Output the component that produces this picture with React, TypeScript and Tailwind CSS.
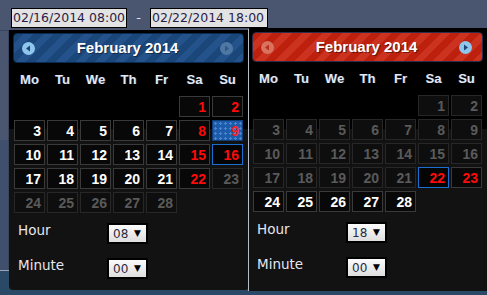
import React from "react";

type CellState = "white" | "red" | "disabled" | "selected" | "redBlue";

const sans = { fontFamily: '"Liberation Sans", Arial, sans-serif' };
const deja = { fontFamily: '"DejaVu Sans", Verdana, sans-serif' };

function Arrow({ dir, active, theme }: { dir: "l" | "r"; active: boolean; theme: "blue" | "red" }) {
  const circle = active ? "#8ec6ee" : theme === "blue" ? "#4f77a4" : "#d9735f";
  const tri = active ? "#1c4474" : theme === "blue" ? "#2d578a" : "#b8301c";
  return (
    <svg width="13" height="13" viewBox="0 0 13 13">
      <circle cx="6.5" cy="6.5" r="6.5" fill={circle} />
      {dir === "l" ? (
        <polygon points="4,6.5 8,3.5 8,9.5" fill={tri} />
      ) : (
        <polygon points="9,6.5 5,3.5 5,9.5" fill={tri} />
      )}
    </svg>
  );
}

function Cell({ n, s }: { n: number; s: CellState }) {
  let cls =
    "h-[21px] w-[31px] flex items-center justify-end pr-[3px] text-[14px] font-bold leading-none border ";
  if (s === "disabled") cls += "border-[#272727] bg-[#0e0e0e] text-[#5a5a5a]";
  else if (s === "white")
    cls += "border-[#3a3a3a] bg-[#080808] text-white";
  else if (s === "red")
    cls += "border-[#3a3a3a] bg-[#080808] text-[#ff0a0a]";
  else if (s === "redBlue")
    cls += "border-[#1a6fd0] bg-[#050505] text-[#ff0a0a]";
  else
    cls +=
      "border-[#0f3d78] bg-[#1d5caa] text-[#ff2020] bg-[radial-gradient(#4a86cf_1px,transparent_1.2px)] bg-[length:5px_5px]";
  return (
    <div className={cls} style={sans}>
      {n}
    </div>
  );
}

function Select({ value }: { value: string }) {
  return (
    <div className="w-[41px] h-[21px] border-2 border-black bg-[linear-gradient(to_bottom,#fbfbfb,#dedede)] flex items-center justify-between pl-[4px] pr-[5px]">
      <span className="text-[12px] text-[#2a2a40] leading-none" style={deja}>
        {value}
      </span>
      <span className="text-[9px] text-black leading-none" style={deja}>
        ▼
      </span>
    </div>
  );
}

function Calendar({
  theme,
  cells,
  hour,
}: {
  theme: "blue" | "red";
  cells: CellState[];
  hour: string;
}) {
  const header =
    theme === "blue"
      ? "bg-[repeating-linear-gradient(135deg,#1b467a_0px,#1b467a_7px,#24538b_7px,#24538b_14px)] border-[#0b2a52]"
      : "bg-[repeating-linear-gradient(135deg,#bd200d_0px,#bd200d_7px,#cb3220_7px,#cb3220_14px)] border-[#2d2c4a]";
  const days = ["Mo", "Tu", "We", "Th", "Fr", "Sa", "Su"];
  return (
    <div className="flex flex-col">
      <div
        className={`h-[30px] w-[231px] rounded-[4px] border flex items-center justify-between pl-[8px] pr-[10px] ${header}`}
      >
        <Arrow dir="l" active={theme === "blue"} theme={theme} />
        <span
          className="text-white text-[15px] font-bold [text-shadow:1px_1px_0_rgba(0,0,0,0.45)]"
          style={sans}
        >
          February 2014
        </span>
        <Arrow dir="r" active={theme === "red"} theme={theme} />
      </div>
      <div className="h-[33px] ml-[1px] grid grid-cols-[repeat(7,31px)] gap-x-[2px] items-center">
        {days.map((d) => (
          <div
            key={d}
            className="text-center text-[13px] font-bold text-[#e4e8f0] [text-shadow:1px_0_0_rgba(40,80,160,0.5)]"
            style={sans}
          >
            {d}
          </div>
        ))}
      </div>
      <div className="ml-[1px] grid grid-cols-[repeat(7,31px)] gap-x-[2px] gap-y-[3px]">
        {Array.from({ length: 5 }).map((_, i) => (
          <div key={"e" + i} className="h-[21px]" />
        ))}
        {cells.map((s, i) => (
          <Cell key={i} n={i + 1} s={s} />
        ))}
      </div>
      <div className="flex items-center h-[21px] mt-[10px] pl-[5px]">
        <span className="w-[89px] text-[13.5px] leading-none text-[#e6e6ee] pb-[5px]" style={deja}>
          Hour
        </span>
        <Select value={hour} />
      </div>
      <div className="flex items-center h-[21px] mt-[14px] pl-[5px]">
        <span className="w-[89px] text-[13.5px] leading-none text-[#e6e6ee] pb-[5px]" style={deja}>
          Minute
        </span>
        <Select value="00" />
      </div>
    </div>
  );
}

export default function App() {
  const left: CellState[] = [];
  const right: CellState[] = [];
  for (let d = 1; d <= 28; d++) {
    let s: CellState = "white";
    if (d === 9) s = "selected";
    else if (d === 16) s = "redBlue";
    else if ([1, 2, 8, 15, 22].includes(d)) s = "red";
    else if (d >= 23) s = "disabled";
    left.push(s);
    let r: CellState = "white";
    if (d <= 21) r = "disabled";
    else if (d === 22) r = "redBlue";
    else if (d === 23) r = "red";
    right.push(r);
  }
  return (
    <div className="relative w-[487px] h-[295px] overflow-hidden bg-[#4a5670]">
      {/* background page lines */}
      <div className="absolute left-[8px] top-[30px] w-px h-[245px] bg-[#3a4660]" />
      <div className="absolute left-0 top-[30px] w-[9px] h-px bg-[#3a4660]" />
      <div className="absolute left-0 top-[140px] w-[9px] h-px bg-[#34405a]" />
      <div className="absolute left-0 top-[183px] w-[9px] h-px bg-[#34405a]" />
      <div className="absolute left-0 top-[140px] w-[8px] h-[130px] bg-[#3f4f6c]" />
      <div className="absolute left-0 top-[270px] w-full h-px bg-[#9aa6b8]" />
      <div className="absolute left-0 top-[271px] w-full h-[24px] bg-[#2a4966]" />

      {/* inputs */}
      <div className="flex items-center pt-[8px] pl-[11px]">
        <div
          className="w-[116px] h-[20px] border border-black bg-[#e3e3e3] text-[12.5px] text-[#2a1c48] leading-[18px] pl-[1px] whitespace-nowrap overflow-hidden"
          style={deja}
        >
          02/16/2014 08:00
        </div>
        <span className="w-[23px] text-center text-[#e0e4ee] text-[13px] pb-[1px]" style={deja}>
          -
        </span>
        <div
          className="w-[118px] h-[20px] -mt-[1px] border border-black bg-[#e3e3e3] text-[12.5px] text-[#2a1c48] leading-[18px] pl-[1px] whitespace-nowrap overflow-hidden"
          style={deja}
        >
          02/22/2014 18:00
        </div>
      </div>

      {/* left picker */}
      <div className="absolute left-[9px] top-[30px] w-[240px] h-[260px] rounded-b-[4px] bg-[linear-gradient(to_bottom,#000_0px,#000_99px,#121212_99px)] pt-[3px] pl-[4px]">
        <Calendar theme="blue" cells={left} hour="08" />
      </div>

      {/* right picker */}
      <div className="absolute left-[248px] top-[28px] w-[242px] h-[263px] border-t border-black border-l border-l-[#b8bcc4] bg-[linear-gradient(to_bottom,#000_0px,#000_100px,#121212_100px)] pt-[3px] pl-[3px]">
        <Calendar theme="red" cells={right} hour="18" />
      </div>
    </div>
  );
}
